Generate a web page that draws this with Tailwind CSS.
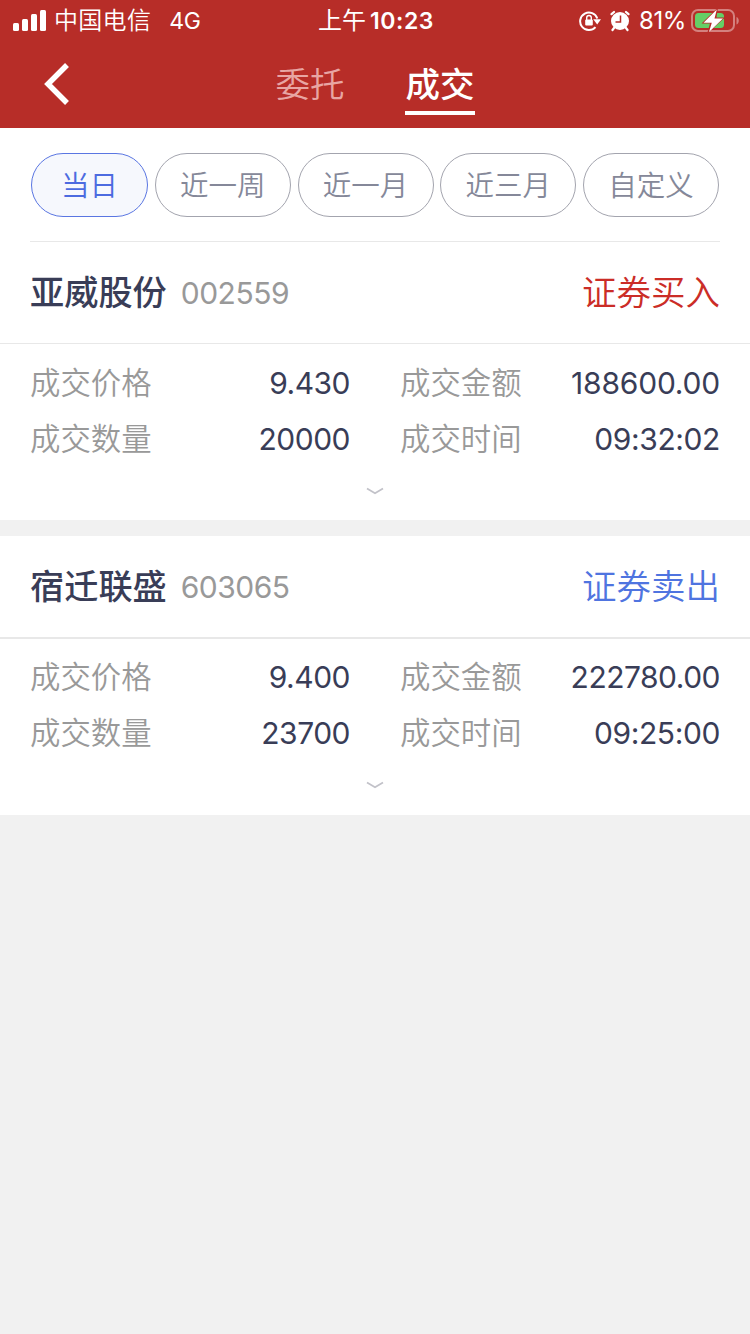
<!DOCTYPE html>
<html lang="zh-CN">

<head>
    <title>成交</title>
    <meta charset="utf-8">
    <script src="https://cdn.jsdelivr.net/npm/@tailwindcss/browser@4"></script>
</head>

<body class="bg-[#f1f1f1] w-[750px] min-h-[1334px] font-['Inter','Noto_Sans_CJK_SC',sans-serif] text-[#393d57] overflow-x-hidden">
    <header class="h-32 bg-[#b72d28] text-white">
        <!-- status bar -->
        <div class="grid grid-cols-3 h-10 pl-[13px] pr-[11px] text-[23px] leading-10">
            <div class="flex items-center">
                <svg class="w-[33px] h-[22px]" viewBox="0 0 33 22" fill="currentColor">
                    <rect x="0" y="13" width="6" height="8" rx="1.5" />
                    <rect x="9" y="9" width="6" height="12" rx="1.5" />
                    <rect x="18" y="4" width="6" height="17" rx="1.5" />
                    <rect x="27" y="0" width="6" height="21" rx="1.5" />
                </svg>
                <span class="ml-2 pt-px text-[24px] font-[350] tracking-[0.3px] whitespace-nowrap">中国电信</span>
                <span class="ml-[18px] pt-px text-[23px] tracking-[-0.3px]">4G</span>
            </div>
            <div class="flex items-center justify-center gap-1 pt-px whitespace-nowrap">
                <span class="text-[24px]">上午</span>
                <span class="font-semibold tracking-[0.6px]">10:23</span>
            </div>
            <div class="flex items-center justify-end">
                <svg class="w-[22px] h-[22px]" viewBox="0 0 22 22" fill="none">
                    <path d="M16.5 17.2A8.8 8.8 0 1 1 18.300 8.500" stroke="currentColor" stroke-width="2" />
                    <path d="M14.2 9.2H22L18.2 14.500z" fill="currentColor" />
                    <rect x="6.2" y="9.5" width="7.6" height="6" rx="1" fill="currentColor" />
                    <path d="M7.7 10V7.8a2.3 2.3 0 0 1 4.6 0V10" stroke="currentColor" stroke-width="1.4" />
                </svg>
                <svg class="w-[20px] h-[22px] ml-[9px]" viewBox="0 0 20 22">
                    <circle cx="10" cy="11" r="9" fill="currentColor" />
                    <path d="M1.500 4.200 4 2M18.500 4.200 16 2M4 18 2.5 20M16 18l1.500 2" stroke="currentColor" stroke-width="2.200" stroke-linecap="round" />
                    <path d="M10.500 5.500V12H5.500" fill="none" stroke="#b72d28" stroke-width="1.500" />
                </svg>
                <span class="ml-[9px] pt-px text-[24px] tracking-[-0.4px]">81%</span>
                <svg class="w-12 h-[26px] ml-[5px]" viewBox="0 0 48 26">
                    <rect x="1" y="2" width="42" height="21" rx="6" fill="none" stroke="#fff" stroke-opacity=".4" stroke-width="2" />
                    <path d="M45.500 9v7.500c1.500-.6 2.300-2 2.300-3.750S47 9.600 45.500 9z" fill="#fff" fill-opacity=".4" />
                    <rect x="4" y="5" width="29" height="15" rx="3.500" fill="#65cf66" />
                    <path d="M27 -.5 10.500 15.500h8.500L16 26 34 9.500h-8.500z" fill="#b72d28" />
                    <path d="M25.800 1.500 12.500 14.700h8.300L18 24 32 10.500h-8.500z" fill="#fff" />
                </svg>
            </div>
        </div>
        <!-- nav -->
        <nav class="grid grid-cols-[1fr_auto_1fr] h-[88px] pl-11">
            <a class="pt-[23px]">
                <svg class="w-[26px] h-[42px]" viewBox="0 0 26 42" fill="none" stroke="currentColor" stroke-width="5.500">
                    <path d="M23 2 4 21l19 19" />
                </svg>
            </a>
            <div class="flex gap-[60px] pr-11 text-[34.5px] leading-[50px] pt-5">
                <a class="w-[70px] h-[55px] text-center font-[350] text-[#e8a5a3]">委托</a>
                <a class="w-[70px] h-[55px] text-center font-medium border-b-4 border-white">成交</a>
            </div>
        </nav>
    </header>

    <section class="bg-white px-[30px] pt-[25px]">
        <div class="flex gap-[6.750px] px-px pb-6 border-b border-[#e8e8e8] text-[28.500px] leading-[64px] font-[350] text-[#858899] text-center">
            <a class="w-[117px] h-16 border border-[#5a76e2] rounded-full bg-[#f6f8fd] text-[#4c6be0]">当日</a>
            <a class="w-[136px] h-16 border border-[#a3a4ae] rounded-full">近一周</a>
            <a class="w-[136px] h-16 border border-[#a3a4ae] rounded-full">近一月</a>
            <a class="w-[136px] h-16 border border-[#a3a4ae] rounded-full">近三月</a>
            <a class="w-[136px] h-16 border border-[#a3a4ae] rounded-full">自定义</a>
        </div>
    </section>

    <main class="flex flex-col gap-4">
        <article class="h-[278px] bg-white">
            <div class="flex items-center h-[102px] px-[30px] border-b border-[#e8e8e8]">
                <h2 class="text-[34.2px] font-medium">亚威股份</h2>
                <span class="ml-[14px] pt-0.5 text-[30px] tracking-[-0.5px] text-[#999]">002559</span>
                <span class="ml-auto text-[34.5px] font-[350] text-[#cb2d27]">证券买入</span>
            </div>
            <dl class="grid grid-cols-2 gap-x-[50px] px-[30px] pt-[11px] text-[30px] leading-[56px]">
                <div class="flex justify-between">
                    <dt class="text-[30.4px] font-[350] text-[#999]">成交价格</dt>
                    <dd class="tracking-[-0.5px]">9.430</dd>
                </div>
                <div class="flex justify-between">
                    <dt class="text-[30.4px] font-[350] text-[#999]">成交金额</dt>
                    <dd class="tracking-[-0.2px]">188600.00</dd>
                </div>
                <div class="flex justify-between">
                    <dt class="text-[30.4px] font-[350] text-[#999]">成交数量</dt>
                    <dd class="tracking-[-0.5px]">20000</dd>
                </div>
                <div class="flex justify-between">
                    <dt class="text-[30.4px] font-[350] text-[#999]">成交时间</dt>
                    <dd class="tracking-[-0.4px]">09:32:02</dd>
                </div>
            </dl>
            <svg class="mx-auto mt-5 w-[18px] h-2" viewBox="0 0 18 8" fill="none" stroke="#c2c2c9" stroke-width="1.800">
                <path d="M1 1.500 9 6.200 17 1.500" />
            </svg>
        </article>

        <article class="h-[279px] bg-white">
            <div class="flex items-center h-[103px] px-[30px] border-b-2 border-[#e8e8e8]">
                <h2 class="text-[34.2px] font-medium">宿迁联盛</h2>
                <span class="ml-[14px] pt-0.5 text-[30px] tracking-[-0.5px] text-[#999]">603065</span>
                <span class="ml-auto text-[34.5px] font-[350] text-[#4f74e0]">证券卖出</span>
            </div>
            <dl class="grid grid-cols-2 gap-x-[50px] px-[30px] pt-[10px] text-[30px] leading-[56px]">
                <div class="flex justify-between">
                    <dt class="text-[30.4px] font-[350] text-[#999]">成交价格</dt>
                    <dd class="tracking-[-0.5px]">9.400</dd>
                </div>
                <div class="flex justify-between">
                    <dt class="text-[30.4px] font-[350] text-[#999]">成交金额</dt>
                    <dd class="tracking-[-0.5px]">222780.00</dd>
                </div>
                <div class="flex justify-between">
                    <dt class="text-[30.4px] font-[350] text-[#999]">成交数量</dt>
                    <dd class="tracking-[-0.5px]">23700</dd>
                </div>
                <div class="flex justify-between">
                    <dt class="text-[30.4px] font-[350] text-[#999]">成交时间</dt>
                    <dd class="tracking-[-0.4px]">09:25:00</dd>
                </div>
            </dl>
            <svg class="mx-auto mt-5 w-[18px] h-2" viewBox="0 0 18 8" fill="none" stroke="#c2c2c9" stroke-width="1.800">
                <path d="M1 1.500 9 6.200 17 1.500" />
            </svg>
        </article>
    </main>
</body>

</html>
